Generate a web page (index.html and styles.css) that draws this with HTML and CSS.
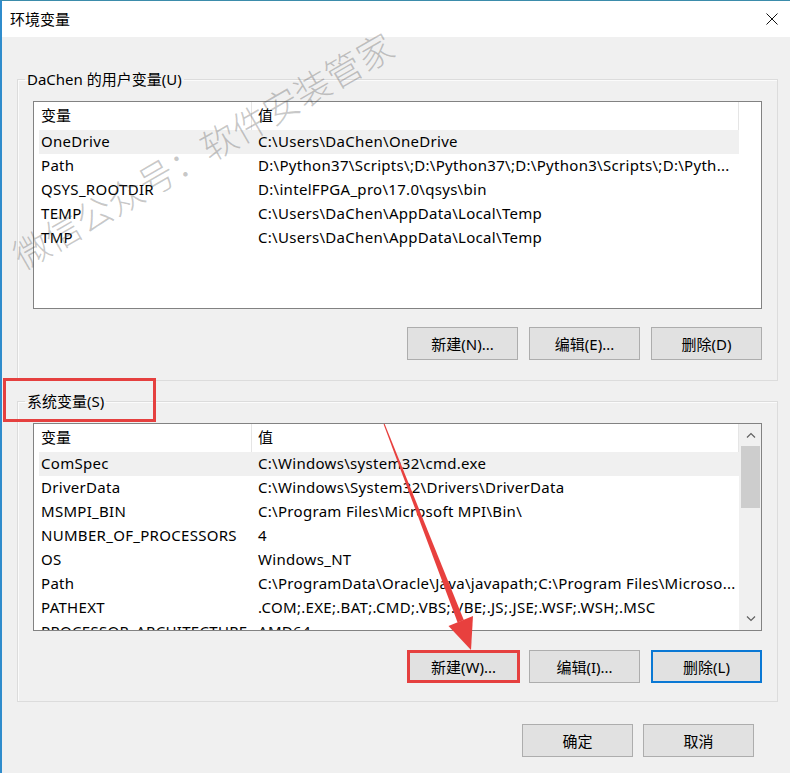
FILE: index.html
```html
<!DOCTYPE html>
<html lang="zh-CN">
<head>
<meta charset="utf-8">
<title>环境变量</title>
<link rel="stylesheet" href="styles.css">
</head>
<body>
<div class="window">
  <div class="titlebar">
    <span class="title">环境变量</span>
    <span class="close">
      <svg width="12" height="12" viewBox="0 0 12 12"><path d="M0.5 0.5 L11.5 11.5 M11.5 0.5 L0.5 11.5" stroke="#111" stroke-width="1" fill="none"/></svg>
    </span>
  </div>
  <div class="content">
    <fieldset class="group">
      <legend>DaChen 的用户变量(U)</legend>
      <div class="group-body">
        <div class="list">
          <div class="list-main">
            <div class="list-head">
              <div class="cell name">变量</div>
              <div class="cell val">值</div>
            </div>
            <div class="row selected"><div class="cell name">OneDrive</div><div class="cell val">C:\Users\DaChen\OneDrive</div></div>
            <div class="row"><div class="cell name">Path</div><div class="cell val">D:\Python37\Scripts\;D:\Python37\;D:\Python3\Scripts\;D:\Pyth...</div></div>
            <div class="row"><div class="cell name">QSYS_ROOTDIR</div><div class="cell val">D:\intelFPGA_pro\17.0\qsys\bin</div></div>
            <div class="row"><div class="cell name">TEMP</div><div class="cell val">C:\Users\DaChen\AppData\Local\Temp</div></div>
            <div class="row"><div class="cell name">TMP</div><div class="cell val">C:\Users\DaChen\AppData\Local\Temp</div></div>
          </div>
          <div class="list-side"></div>
        </div>
        <div class="btn-row">
          <button class="btn">新建(N)...</button>
          <button class="btn">编辑(E)...</button>
          <button class="btn">删除(D)</button>
        </div>
      </div>
    </fieldset>

    <fieldset class="group group-sys">
      <legend>系统变量(S)</legend>
      <div class="group-body body-sys">
        <div class="list">
          <div class="list-main">
            <div class="list-head">
              <div class="cell name">变量</div>
              <div class="cell val">值</div>
            </div>
            <div class="row selected"><div class="cell name">ComSpec</div><div class="cell val">C:\Windows\system32\cmd.exe</div></div>
            <div class="row"><div class="cell name">DriverData</div><div class="cell val">C:\Windows\System32\Drivers\DriverData</div></div>
            <div class="row"><div class="cell name">MSMPI_BIN</div><div class="cell val">C:\Program Files\Microsoft MPI\Bin\</div></div>
            <div class="row"><div class="cell name">NUMBER_OF_PROCESSORS</div><div class="cell val">4</div></div>
            <div class="row"><div class="cell name">OS</div><div class="cell val">Windows_NT</div></div>
            <div class="row"><div class="cell name">Path</div><div class="cell val">C:\ProgramData\Oracle\Java\javapath;C:\Program Files\Microso...</div></div>
            <div class="row"><div class="cell name">PATHEXT</div><div class="cell val">.COM;.EXE;.BAT;.CMD;.VBS;.VBE;.JS;.JSE;.WSF;.WSH;.MSC</div></div>
            <div class="row"><div class="cell name">PROCESSOR_ARCHITECTURE</div><div class="cell val">AMD64</div></div>
          </div>
          <div class="list-side scrollbar">
            <div class="sb-btn">
              <svg width="10" height="6" viewBox="0 0 10 6"><path d="M1 5.5 L5 1.5 L9 5.5" stroke="#606060" stroke-width="1.2" fill="none"/></svg>
            </div>
            <div class="sb-thumb"></div>
            <div class="sb-track"></div>
            <div class="sb-btn">
              <svg width="10" height="6" viewBox="0 0 10 6"><path d="M1 0.5 L5 4.5 L9 0.5" stroke="#606060" stroke-width="1.2" fill="none"/></svg>
            </div>
          </div>
        </div>
        <div class="btn-row">
          <button class="btn btn-marked">新建(W)...</button>
          <button class="btn">编辑(I)...</button>
          <button class="btn btn-focus">删除(L)</button>
        </div>
      </div>
    </fieldset>

    <div class="dialog-buttons">
      <button class="btn">确定</button>
      <button class="btn">取消</button>
    </div>
  </div>

  <div class="watermark">微信公众号：软件安装管家</div>
  <div class="mark-box"></div>
  <svg class="arrow" width="790" height="773" viewBox="0 0 790 773">
    <polygon points="383.6,424.2 384.6,423.8 463.8,620 457.6,622.5" fill="#e8403e"/>
    <polygon points="471,650 448.5,626 473,616" fill="#e8403e"/>
  </svg>
</div>
</body>
</html>
```

FILE: styles.css
```css
* { box-sizing: border-box; }

html, body {
  margin: 0;
  padding: 0;
  background: #f0f0f0;
}

body {
  font-family: "Noto Sans", "Noto Sans CJK SC", sans-serif;
  font-size: 15px;
  color: #000;
}

.window {
  position: relative;
  width: 790px;
  height: 773px;
  border-top: 1px solid #3b8cab;
  border-left: 2px solid #2f8ccc;
  background: #f0f0f0;
  overflow: hidden;
}

.titlebar {
  height: 36px;
  background: #fff;
  display: flex;
  align-items: center;
  justify-content: space-between;
}

.title {
  padding-left: 8px;
  font-size: 15px;
  line-height: 20px;
}

.close {
  width: 36px;
  height: 36px;
  display: flex;
  align-items: center;
  justify-content: center;
}

.content {
  padding: 32px 12px 0 15px;
  display: flex;
  flex-direction: column;
}

.group {
  margin: 0;
  padding: 0;
  min-width: 0;
  border: 1px solid #dcdcdc;
  box-shadow: inset 1px 1px 0 #fbfbfb;
}

.group legend {
  margin-left: 7px;
  padding: 0 2px;
  line-height: 20px;
  height: 20px;
  font-size: 15px;
}

.group-sys {
  margin-top: 10px;
}

.group-body {
  padding: 12px 15px 20px 15px;
}

.body-sys {
  padding-bottom: 18px;
}

.list {
  height: 208px;
  border: 1px solid #828282;
  background: #fff;
  display: flex;
  overflow: hidden;
}

.list-main {
  width: 705px;
  padding-left: 5px;
  overflow: hidden;
}

.list-side {
  width: 22px;
}

.list-head {
  display: flex;
  height: 28px;
  align-items: stretch;
  border-right: 1px solid #e5e5e5;
  margin-left: -5px;
  padding-left: 5px;
  width: 705px;
}

.list-head .cell {
  line-height: 27px;
}

.list-head .name {
  border-right: 1px solid #e5e5e5;
}

.row {
  display: flex;
  height: 24px;
  line-height: 22px;
  width: 700px;
}

.row .cell {
  letter-spacing: 0.3px;
}

.row.selected {
  background: #f0f0f0;
}

.cell {
  white-space: nowrap;
  overflow: hidden;
}

.cell.name {
  width: 213px;
  flex: none;
  padding-left: 2px;
}

.cell.val {
  flex: 1;
  padding-left: 6px;
}

.scrollbar {
  background: #f0f0f0;
  display: flex;
  flex-direction: column;
  border-left: 1px solid #f0f0f0;
}

.sb-btn {
  height: 22px;
  display: flex;
  align-items: center;
  justify-content: center;
  flex: none;
}

.sb-thumb {
  height: 62px;
  margin: 0 1px;
  background: #cdcdcd;
  flex: none;
}

.sb-track {
  flex: 1;
}

.btn-row {
  margin-top: 18px;
  display: flex;
  justify-content: flex-end;
  gap: 11px;
}

.body-sys .btn-row {
  margin-top: 19px;
}

.btn {
  width: 111px;
  height: 33px;
  margin: 0;
  padding: 0;
  background: #e1e1e1;
  border: 1px solid #adadad;
  font-family: "Noto Sans", "Noto Sans CJK SC", sans-serif;
  font-size: 15px;
  color: #000;
  line-height: 20px;
}

.btn-marked {
  border: 3px solid #e5403f;
  width: 113px;
  margin-right: -2px;
}

.btn-focus {
  border: 2px solid #0a78d4;
}

.dialog-buttons {
  margin-top: 22px;
  margin-right: 24px;
  display: flex;
  justify-content: flex-end;
  gap: 10px;
}

.watermark {
  position: absolute;
  left: -16px;
  top: 126px;
  width: 432px;
  height: 44px;
  line-height: 44px;
  font-size: 36px;
  font-weight: 300;
  color: rgba(60, 60, 60, 0.28);
  white-space: nowrap;
  text-align: center;
  transform: rotate(-30deg);
  transform-origin: center;
  pointer-events: none;
  font-family: "Noto Sans CJK SC", sans-serif;
}

.mark-box {
  position: absolute;
  left: 1px;
  top: 377px;
  width: 153px;
  height: 44px;
  border: 3px solid #e5403f;
  pointer-events: none;
}

.arrow {
  position: absolute;
  left: -2px;
  top: -1px;
  pointer-events: none;
}
```
